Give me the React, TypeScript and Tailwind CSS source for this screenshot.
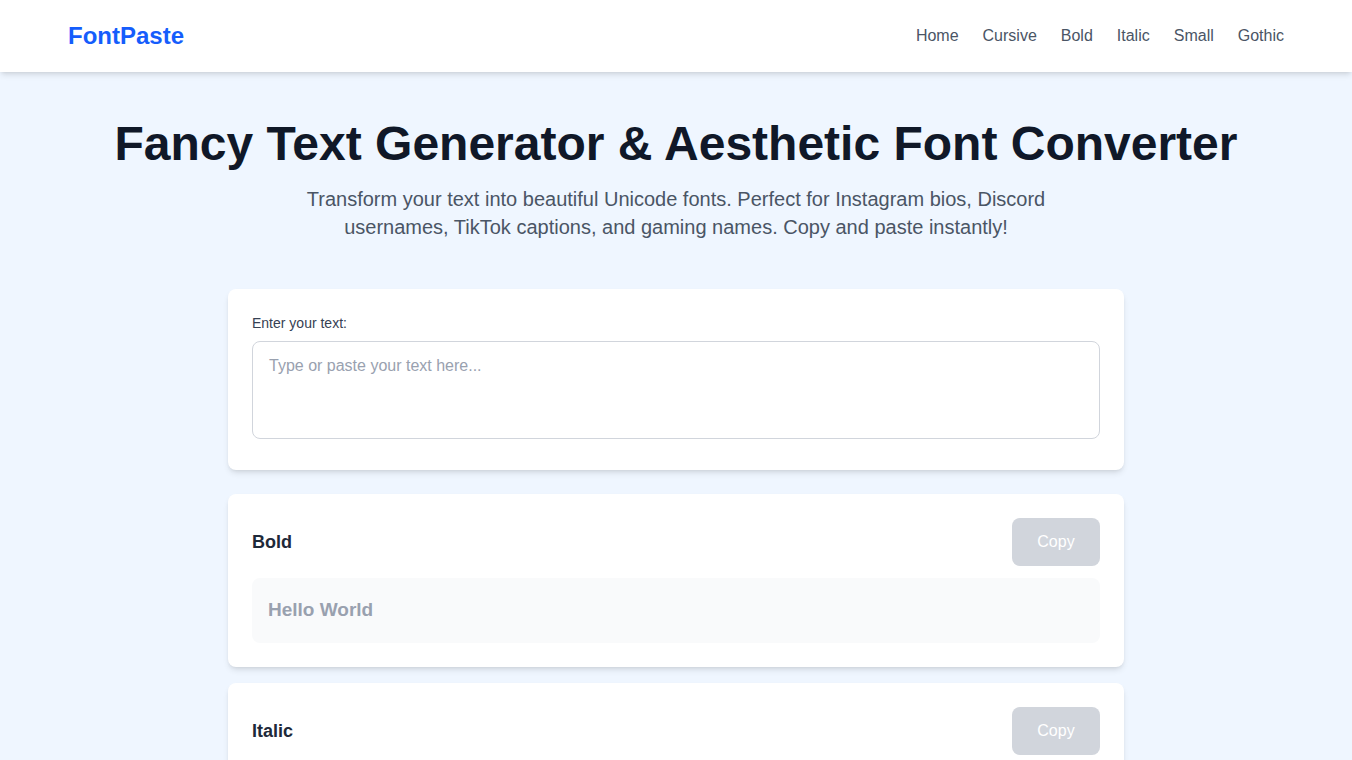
import { useState } from "react";

const navLinks = ["Home", "Cursive", "Bold", "Italic", "Small", "Gothic"];

const styles = [
  { name: "Bold", preview: "Hello World", className: "font-bold" },
  { name: "Italic", preview: "Hello World", className: "italic" },
];

function StyleCard({
  name,
  preview,
  className,
}: {
  name: string;
  preview: string;
  className: string;
}) {
  return (
    <div className="bg-white rounded-lg shadow-md p-6">
      <div className="flex items-center justify-between mb-3">
        <h3 className="text-lg font-semibold text-gray-800">{name}</h3>
        <button
          disabled
          className="w-[88px] py-3 rounded-lg bg-gray-300 text-white text-base"
        >
          Copy
        </button>
      </div>
      <div className="h-[65px] flex items-center px-4 bg-gray-50 rounded-lg">
        <span className={`text-[19px] text-gray-400 ${className}`}>
          {preview}
        </span>
      </div>
    </div>
  );
}

export default function App() {
  const [text, setText] = useState("");

  return (
    <div className="min-h-screen bg-blue-50 font-['Liberation_Sans',Arial,sans-serif]">
      {/* Header */}
      <header className="bg-white shadow-md">
        <div className="max-w-7xl mx-auto px-8 h-[72px] flex items-center justify-between">
          <a className="text-2xl font-bold text-blue-600">FontPaste</a>
          <nav className="flex items-center gap-6">
            {navLinks.map((link) => (
              <a key={link} className="text-base text-gray-600">
                {link}
              </a>
            ))}
          </nav>
        </div>
      </header>

      <main className="px-8 pt-12 pb-12">
        {/* Hero */}
        <div className="text-center mb-12">
          <h1 className="text-5xl font-bold text-gray-900 mb-[17px]">
            Fancy Text Generator &amp; Aesthetic Font Converter
          </h1>
          <p className="text-xl leading-7 text-gray-600 max-w-3xl mx-auto">
            Transform your text into beautiful Unicode fonts. Perfect for
            Instagram bios, Discord usernames, TikTok captions, and gaming
            names. Copy and paste instantly!
          </p>
        </div>

        <div className="max-w-4xl mx-auto">
          {/* Input */}
          <div className="bg-white rounded-lg shadow-md p-6 pb-[31px] mb-6">
            <label className="block text-sm text-gray-700 mb-2">
              Enter your text:
            </label>
            <textarea
              rows={3}
              value={text}
              onChange={(e) => setText(e.target.value)}
              placeholder="Type or paste your text here..."
              className="block w-full px-4 py-3 text-base border border-gray-300 rounded-lg resize-none placeholder:text-gray-400 focus:outline-none"
            />
          </div>

          {/* Styles */}
          <div className="flex flex-col gap-4">
            {styles.map((s) => (
              <StyleCard key={s.name} {...s} />
            ))}
          </div>
        </div>
      </main>
    </div>
  );
}
